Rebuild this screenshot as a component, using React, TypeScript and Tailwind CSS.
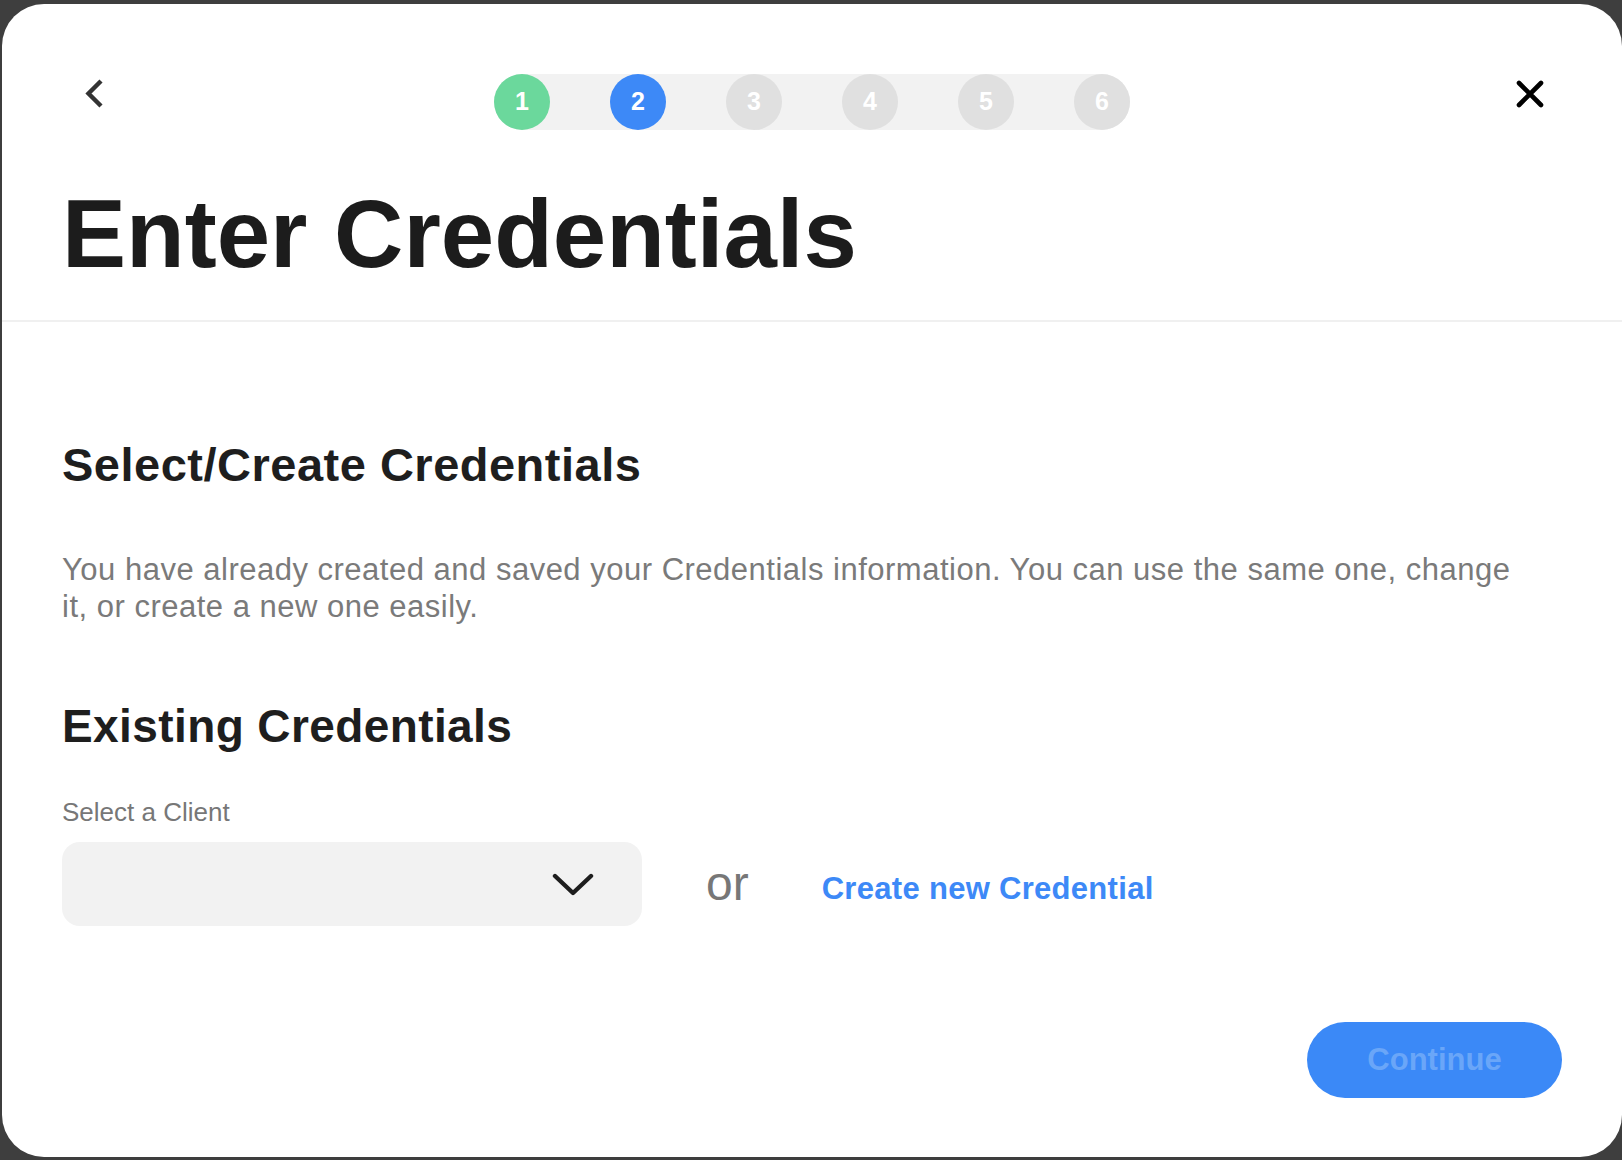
import { useState } from 'react';

const steps = [1, 2, 3, 4, 5, 6];

const stepColor = (n: number, current: number) => {
  if (n < current) return 'bg-[#6bd89c]';
  if (n === current) return 'bg-[#3d89f7]';
  return 'bg-[#e0e0e0]';
};

const Stepper = ({ current }: { current: number }) => (
  <div className="flex h-[56px] w-[636px] items-center justify-between rounded-full bg-[#f2f2f2]">
    {steps.map((n) => (
      <div
        key={n}
        className={`flex h-[56px] w-[56px] items-center justify-center rounded-full text-[25px] font-bold text-white ${stepColor(n, current)}`}
      >
        {n}
      </div>
    ))}
  </div>
);

const App = () => {
  const [client, setClient] = useState('');

  return (
    <div className="h-[1160px] w-full overflow-hidden bg-[#3e3e3e] pl-[2px] pt-[4px] font-['Liberation_Sans',Arial,sans-serif]">
      <div className="flex h-[1153px] w-[1620px] flex-col overflow-hidden rounded-[42px] bg-white">
        {/* header */}
        <div className="px-[60px] pt-[70px]">
          <div className="grid grid-cols-[1fr_auto_1fr] items-start">
            <button className="ml-[22px] mt-[4px] justify-self-start text-[#333333]">
              <svg width="20" height="31" viewBox="0 0 20 31" fill="none">
                <path d="M17 3 L4.5 15.5 L17 28" stroke="currentColor" strokeWidth="4.4" />
              </svg>
            </button>
            <Stepper current={2} />
            <button className="mr-[18px] mt-[6px] justify-self-end text-black">
              <svg width="28" height="28" viewBox="0 0 28 28" fill="none">
                <path d="M3 3 L25 25 M25 3 L3 25" stroke="currentColor" strokeWidth="4.6" strokeLinecap="round" />
              </svg>
            </button>
          </div>
          <h1 className="mt-[56px] text-[96px] font-bold leading-none text-[#1c1c1c]">Enter Credentials</h1>
        </div>
        <div className="mt-[38px] h-[2px] w-full bg-[#f0f0f0]" />

        {/* body */}
        <div className="flex flex-1 flex-col px-[60px] pt-[119px]">
          <h2 className="text-[47px] font-bold leading-none tracking-[0.5px] text-[#1e1e1e]">
            Select/Create Credentials
          </h2>
          <p className="mt-[63px] max-w-[1470px] text-[31px] leading-[37px] tracking-[0.5px] text-[#7a7a7a]">
            You have already created and saved your Credentials information. You can use the same one, change it, or
            create a new one easily.
          </p>

          <h2 className="mt-[78px] text-[46px] font-bold leading-none tracking-[0.4px] text-[#1e1e1e]">
            Existing Credentials
          </h2>
          <label className="mt-[50px] text-[26px] leading-none text-[#777777]">Select a Client</label>

          <div className="mt-[17px] flex items-center">
            <button
              onClick={() => setClient(client)}
              className="flex h-[84px] w-[580px] items-center justify-end rounded-[18px] bg-[#f2f2f2] pr-[48px] text-[#1e1e1e]"
            >
              <svg width="42" height="23" viewBox="0 0 42 23" fill="none">
                <path d="M3 3 L21 20 L39 3" stroke="currentColor" strokeWidth="4.4" strokeLinecap="round" strokeLinejoin="round" />
              </svg>
            </button>
            <span className="ml-[64px] text-[48px] leading-none text-[#777777]">or</span>
            <button className="ml-[73px] mt-[9px] text-[31px] font-bold leading-none tracking-[0.3px] text-[#3d89f7]">
              Create new Credential
            </button>
          </div>

          <div className="mt-[96px] flex justify-end">
            <button className="h-[76px] w-[255px] rounded-full bg-[#3b89f7] text-[31px] font-bold text-[#6aa6f8]">
              Continue
            </button>
          </div>
        </div>
      </div>
    </div>
  );
};

export default App;
